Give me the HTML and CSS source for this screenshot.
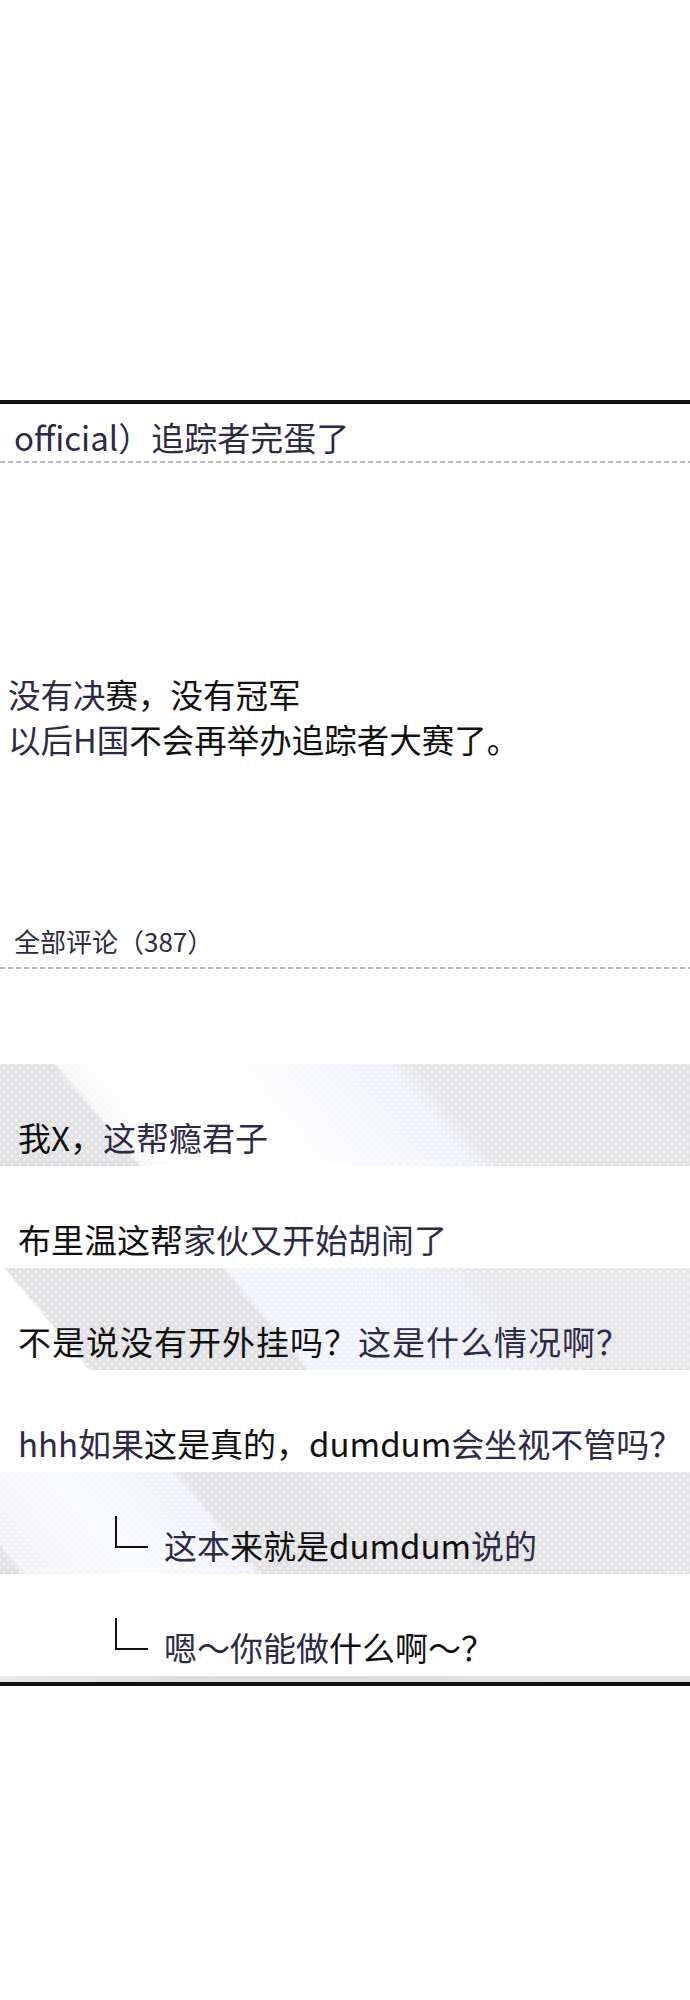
FILE: index.html
```html
<!DOCTYPE html>
<html lang="zh-CN">
<head>
    <meta charset="UTF-8">
    <meta name="viewport" content="width=device-width, initial-scale=1.0">
    <title>追踪者完蛋了</title>
    <link rel="stylesheet" href="styles.css">
</head>
<body>
    <div class="thread">
        <div class="rule"></div>
        <h1 class="title">official）追踪者完蛋了</h1>

        <div class="post">
            <p>没有决<span class="ink">赛，没有冠军</span></p>
            <p>以后H国<span class="ink">不会再举办追踪者大赛了。</span></p>
        </div>

        <h2 class="comments-head">全部评论（387）</h2>

        <ul class="comment-list">
            <li class="comment band band-one"><span><span class="ink">我X，</span>这帮瘾君子</span></li>
            <li class="comment"><span><span class="ink">布里温这帮</span>家伙又开始胡闹了</span></li>
            <li class="comment band band-two"><span class="wide"><span class="ink">不是说没有开外挂吗？</span>这是什么情况啊？</span></li>
            <li class="comment"><span>hhh如果<span class="ink">这是真的，dumdum</span>会坐视不管吗？</span></li>
            <li class="comment reply band band-three"><i class="branch"></i><span>这本<span class="ink">来就是dumdum</span>说的</span></li>
            <li class="comment reply"><i class="branch"></i><span>嗯～你能做<span class="ink">什么啊～？</span></span></li>
        </ul>
        <div class="strip"></div>
        <div class="rule"></div>
    </div>
</body>
</html>
```

FILE: styles.css
```css
body {
    margin: 0;
    background: #fff;
    font-family: "Noto Sans CJK SC", "Noto Sans", sans-serif;
    color: #2c2a48;
}

.thread {
    padding-top: 400px;
}

.rule {
    height: 4px;
    background: #111;
}

.ink {
    color: #111;
}

.title {
    margin: 0;
    padding: 9px 14px 2px;
    font-size: 33px;
    font-weight: normal;
    line-height: 48px;
    background: linear-gradient(to right, #b8b8b8 5px, transparent 5px) left bottom / 8px 2px repeat-x;
}

.post {
    margin-top: 208px;
    padding-left: 8px;
    font-size: 32.5px;
    line-height: 45px;
}

.post p {
    margin: 0;
}

.comments-head {
    margin: 163px 0 0;
    padding: 0 14px 11px;
    font-size: 26px;
    font-weight: normal;
    line-height: 34px;
    background: linear-gradient(to right, #b8b8b8 5px, transparent 5px) left bottom / 8px 2px repeat-x;
}

.comment-list {
    list-style: none;
    margin: 95px 0 0;
    padding: 0;
}

.comment {
    display: flex;
    align-items: flex-start;
    height: 102px;
    box-sizing: border-box;
    padding: 52px 0 0 18px;
    font-size: 33px;
    line-height: 42px;
}

.wide {
    letter-spacing: 1px;
}

.reply {
    padding-left: 115px;
}

.branch {
    width: 33px;
    height: 32px;
    margin: -8px 16px 0 0;
    box-sizing: border-box;
    border-left: 2px solid #111;
    border-bottom: 2px solid #111;
}

.band {
    background-size: 8px 8px, 8px 8px, auto;
    background-position: 0 0, 4px 4px, 0 0;
}

.band-one {
    background-image:
        radial-gradient(circle, rgba(255, 255, 255, 0.8) 0 0.8px, transparent 1.3px),
        radial-gradient(circle, rgba(255, 255, 255, 0.8) 0 0.8px, transparent 1.3px),
        linear-gradient(50deg, #e2e2e4 0 105px, #f7f7f9 110px, #fff 140px, #fff 230px, #f0f2fa 360px, #e5e5e7 382px, #e3e3e5 100%);
}

.band-two {
    background-image:
        radial-gradient(circle, rgba(255, 255, 255, 0.8) 0 0.8px, transparent 1.3px),
        radial-gradient(circle, rgba(255, 255, 255, 0.8) 0 0.8px, transparent 1.3px),
        linear-gradient(50deg, #fff 0 67px, #e2e2e4 71px, #e2e2e4 234px, #f3f5fc 240px, #eef0f8 380px, #e6e6e8 450px, #e6e6e8 100%);
}

.band-three {
    background-image:
        radial-gradient(circle, rgba(255, 255, 255, 0.8) 0 0.8px, transparent 1.3px),
        radial-gradient(circle, rgba(255, 255, 255, 0.8) 0 0.8px, transparent 1.3px),
        linear-gradient(50deg, #e2e2e4 0 16px, #f3f3f5 20px, #fafbfe 110px, #f1f2f9 196px, #e3e3e5 202px, #e5e5e7 100%);
}

.strip {
    height: 6px;
    background: linear-gradient(to right, #e8e8ea, #dcdcde 30%, #e2e2e4);
}
```
